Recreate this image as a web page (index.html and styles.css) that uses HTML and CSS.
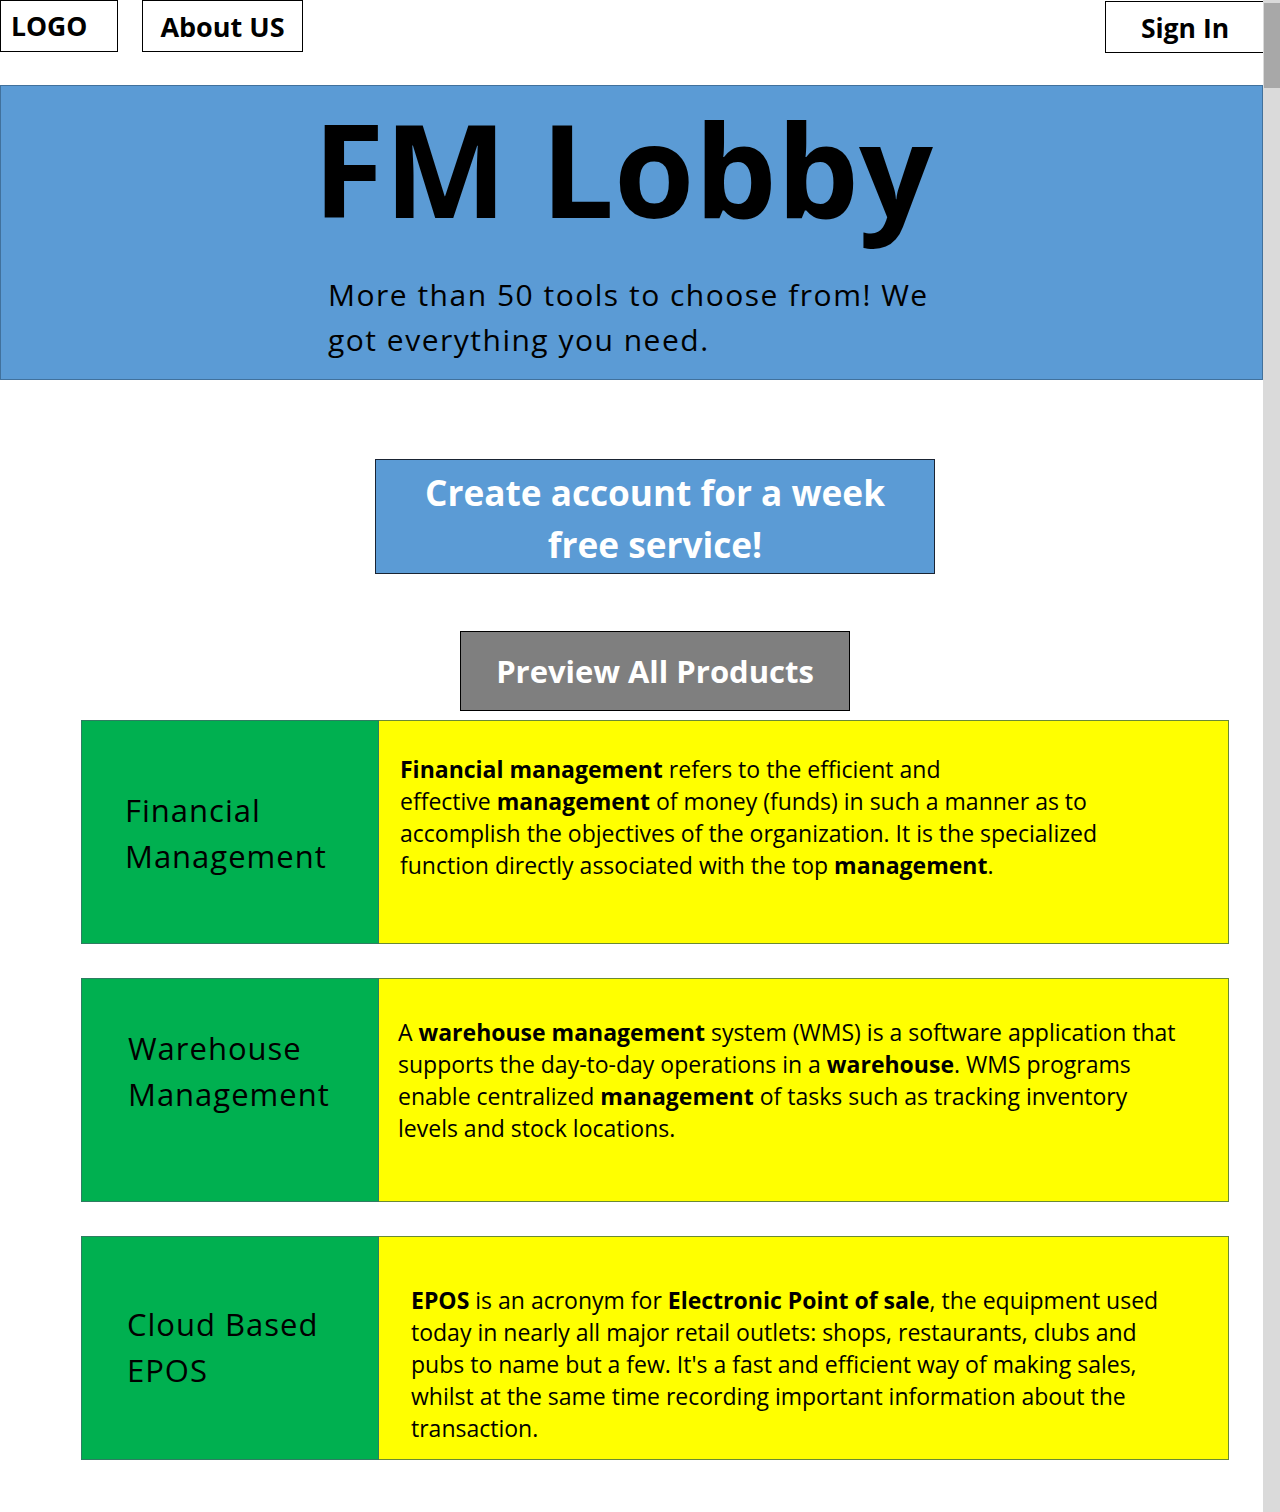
FILE: index.html
```html
<!DOCTYPE html>
<html lang="en">
<head>
<meta charset="utf-8">
<title>FM Lobby</title>
<link rel="stylesheet" href="styles.css">
</head>
<body>
<div class="page">
  <header class="topbar">
    <a class="nav-box nav-logo">LOGO</a>
    <a class="nav-box nav-about">About US</a>
    <a class="nav-box nav-signin">Sign In</a>
  </header>

  <section class="hero">
    <h1 class="hero-title">FM Lobby</h1>
    <p class="hero-sub">More than 50 tools to choose from! We<br>got everything you need.</p>
  </section>

  <main class="content">
    <a class="cta">Create account for a week<br>free service!</a>
    <a class="preview">Preview All Products</a>

    <div class="card card-fin">
      <div class="card-title">Financial<br>Management</div>
      <div class="card-body"><b>Financial management</b> refers to the efficient and<br>effective <b>management</b> of money (funds) in such a manner as to<br>accomplish the objectives of the organization. It is the specialized<br>function directly associated with the top <b>management</b>.</div>
    </div>

    <div class="card card-wh">
      <div class="card-title">Warehouse<br>Management</div>
      <div class="card-body">A <b>warehouse management</b> system (WMS) is a software application that<br>supports the day-to-day operations in a <b>warehouse</b>. WMS programs<br>enable centralized <b>management</b> of tasks such as tracking inventory<br>levels and stock locations.</div>
    </div>

    <div class="card card-epos">
      <div class="card-title">Cloud Based<br>EPOS</div>
      <div class="card-body"><b>EPOS</b> is an acronym for <b>Electronic Point of sale</b>, the equipment used<br>today in nearly all major retail outlets: shops, restaurants, clubs and<br>pubs to name but a few. It's a fast and efficient way of making sales,<br>whilst at the same time recording important information about the<br>transaction.</div>
    </div>
  </main>
</div>
<div class="scrollbar"><div class="scrollbar-thumb"></div></div>
</body>
</html>
```

FILE: styles.css
```css
* { box-sizing: border-box; }

html, body {
  margin: 0;
  padding: 0;
  background: #ffffff;
}

body {
  font-family: "Open Sans", "Lato", "Liberation Sans", sans-serif;
  color: #000;
}

.page {
  width: 1263px;
  padding-bottom: 52px;
}

/* top bar */
.topbar {
  display: flex;
  align-items: flex-start;
  height: 85px;
}

.nav-box {
  display: flex;
  align-items: center;
  justify-content: center;
  border: 1px solid #000;
  font-weight: 700;
  font-size: 27px;
  color: #000;
  text-decoration: none;
}

.nav-logo {
  width: 118px;
  height: 52px;
  justify-content: flex-start;
  padding-left: 10px;
  font-size: 26.5px;
}

.nav-about {
  width: 161px;
  height: 52px;
  margin-left: 24px;
}

.nav-signin {
  width: 160px;
  height: 52px;
  margin-top: 1px;
  margin-left: auto;
  margin-right: -2px;
  padding-top: 2px;
  font-size: 26.5px;
}

/* hero */
.hero {
  background: #5b9bd5;
  border: 1px solid #41719c;
  height: 295px;
  padding-top: 14px;
}

.hero-title {
  margin: 0;
  text-align: center;
  font-size: 130px;
  line-height: 136px;
  font-weight: 700;
  padding-right: 17px;
}

.hero-sub {
  width: 607px;
  margin: 36px auto 0;
  font-size: 30px;
  line-height: 45px;
  letter-spacing: 1.5px;
  white-space: nowrap;
}

/* main content column */
.content {
  margin-left: 81px;
  width: 1148px;
  padding-top: 79px;
  display: flex;
  flex-direction: column;
  align-items: center;
}

.cta {
  width: 560px;
  height: 115px;
  background: #5b9bd5;
  border: 1px solid #1a2433;
  color: #fff;
  font-weight: 700;
  font-size: 35.2px;
  line-height: 52px;
  text-align: center;
  padding-top: 6px;
  text-decoration: none;
}

.preview {
  margin-top: 57px;
  width: 390px;
  height: 80px;
  background: #7f7f7f;
  border: 1px solid #000;
  color: #fff;
  font-weight: 700;
  font-size: 31px;
  line-height: 78px;
  text-align: center;
  text-decoration: none;
}

/* cards */
.card {
  align-self: stretch;
  display: grid;
  grid-template-columns: 298px 1fr;
  height: 224px;
  margin-top: 34px;
}

.card-fin { margin-top: 9px; }

.card-title {
  background: #00b050;
  border: 1px solid #2e7d61;
  font-size: 31px;
  line-height: 46px;
  letter-spacing: 1px;
  padding: 66px 0 0 43px;
}

.card-body {
  background: #ffff00;
  border: 1px solid #6a8a35;
  border-left: none;
  font-size: 23px;
  line-height: 32px;
  padding: 32px 0 0 21px;
  white-space: nowrap;
}

.card-wh .card-title { padding-top: 46px; padding-left: 46px; }
.card-wh .card-body { padding-top: 37px; padding-left: 19px; }

.card-epos .card-title { padding-top: 64px; padding-left: 45px; }
.card-epos .card-body { padding-top: 47px; padding-left: 32px; }

/* fake browser scrollbar */
.scrollbar {
  position: fixed;
  top: 0;
  right: 0;
  width: 17px;
  height: 100%;
  background: #dadada;
}

.scrollbar-thumb {
  margin-top: 3px;
  margin-left: 1px;
  width: 16px;
  height: 85px;
  background: #a8a8a8;
}
```
